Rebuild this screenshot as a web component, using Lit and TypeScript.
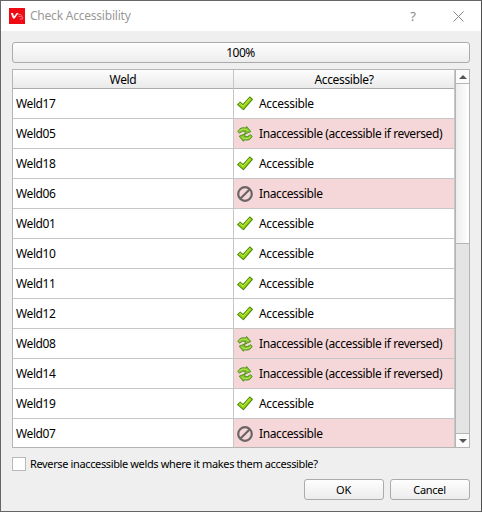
import { LitElement, html, css, svg } from "lit";
import { customElement } from "lit/decorators.js";

type Status = "ok" | "reversible" | "blocked";

const LABELS: Record<Status, string> = {
  ok: "Accessible",
  reversible: "Inaccessible (accessible if reversed)",
  blocked: "Inaccessible",
};

const WELDS: [string, Status][] = [
  ["Weld17", "ok"],
  ["Weld05", "reversible"],
  ["Weld18", "ok"],
  ["Weld06", "blocked"],
  ["Weld01", "ok"],
  ["Weld10", "ok"],
  ["Weld11", "ok"],
  ["Weld12", "ok"],
  ["Weld08", "reversible"],
  ["Weld14", "reversible"],
  ["Weld19", "ok"],
  ["Weld07", "blocked"],
];

const arrow = () => svg`<path d="M.8 5.6C2.2 2.4 5 1.1 8.8 2L9.6.5 13.8 5.6 8 8 8.4 5.7C6.2 4.8 4.4 5.2 2.9 7.2Z"
    fill="#84c62c" stroke="#4b8a14" stroke-width=".9" stroke-linejoin="round"/>
  <path d="M2.3 5.4C3.8 3.2 6 2.7 9.2 3.4L11.4 4.8" fill="none" stroke="#c0e868" stroke-width=".9"/>`;

const ICONS: Record<Status, unknown> = {
  ok: svg`<path d="M.7 8.6 3.2 6.2 6 8.7 12.8 1 15.4 3.4 6.4 13.6Z" fill="#9bd60f" stroke="#4d8a0b" stroke-width="1.1" stroke-linejoin="round"/>
    <path d="M2.2 8.4 3.3 7.4 6.1 10.1 13 2.4" fill="none" stroke="#c4ee55" stroke-width=".9"/>`,
  reversible: svg`${arrow()}<g transform="rotate(180 8 7.9)">${arrow()}</g>`,
  blocked: svg`<circle cx="8" cy="8" r="6.8" fill="none" stroke="#696466" stroke-width="2.2"/>
    <path d="M3.5 12.5 12.5 3.5" stroke="#696466" stroke-width="2.2"/>`,
};

@customElement("app-root")
export class AppRoot extends LitElement {
  static styles = css`
    :host {
      display: flex;
      flex-direction: column;
      box-sizing: border-box;
      width: 482px;
      height: 512px;
      border: 1px solid #666;
      border-right-color: #505050;
      background: #efefef;
      color: #000;
      font: 12px/16px "Noto Sans", "Open Sans", sans-serif;
      white-space: nowrap;
      overflow: hidden;
    }
    * { box-sizing: border-box; }
    svg { display: block; flex: none; }
    .title {
      display: flex;
      align-items: center;
      height: 30px;
      flex: none;
      padding: 0 17px 0 8px;
      background: #fff;
      color: #999;
    }
    .caption { margin-left: 5px; flex: 1; letter-spacing: -0.22px; }
    .help { margin-right: 37px; font-size: 13px; color: #8a8a8a; }
    .content { display: flex; flex-direction: column; padding: 11px; }
    .progress, .button {
      display: flex;
      align-items: center;
      justify-content: center;
      height: 21px;
      border: 1px solid #ababab;
      border-radius: 3px;
      background: linear-gradient(#fefefe, #ececec);
    }
    .progress { letter-spacing: -0.5px; padding-right: 1px; }
    .table { display: flex; height: 379px; margin-top: 6px; border: 1px solid #b5b5b5; background: #fff; }
    .grid { flex: 1; }
    .row, .head { display: grid; grid-template-columns: 221px 221px; }
    .head { height: 19px; background: linear-gradient(#fdfdfd, #eaeaea); border-bottom: 1px solid #ababab; text-align: center; line-height: 19px; letter-spacing: -0.35px; }
    .head div { border-right: 1px solid #c6c6c6; }
    .row { height: 30px; }
    .cell { display: flex; align-items: center; height: 30px; padding: 0 0 0 3px; border-right: 1px solid #c6c6c6; border-bottom: 1px solid #c6c6c6; letter-spacing: -0.4px; }
    .row:last-child, .row:last-child .cell { height: 28px; border-bottom: 0; }
    .row:last-child .cell { padding-top: 1px; }
    .bad { background: #f6d7d9; }
    .cell svg { margin-right: 6px; }
    .ok { letter-spacing: -0.3px; }
    .scroll { display: flex; flex-direction: column; width: 15px; border-left: 1px solid #b5b5b5; background: #e4e4e4; }
    .step { display: flex; align-items: center; justify-content: center; height: 13px; background: #fbfbfb; }
    .thumb { height: 161px; border: solid #b5b5b5; border-width: 1px 0; background: linear-gradient(90deg, #ededed, #fff); }
    .down { height: 14px; margin-top: auto; border-top: 1px solid #b5b5b5; }
    .option { display: flex; align-items: center; height: 16px; margin-top: 8px; font-size: 11px; }
    .box { width: 14px; height: 14px; border: 1px solid #b9b9b9; background: #fff; }
    .option span { margin-left: 4px; letter-spacing: -0.37px; }
    .actions { display: flex; justify-content: flex-end; gap: 6px; margin-top: 7px; }
    .button { width: 80px; font-size: 11px; letter-spacing: -0.3px; padding-right: 1px; }
  `;

  render() {
    return html`
      <div class="title">
        <svg width="16" height="16" viewBox="0 0 16 16">
          <path d="M0 0H16V16H0Z" fill="#f00a14" />
          <path d="M1.8 5H4L5 8.6 7.7 5H9.4L5.7 10.5H4Z" fill="#fff" />
          <path d="M8.6 6.4H11.4L13.4 8M9.5 8.4H11.8L13.6 9.2V11H10.8" fill="none" stroke="#ff8e92" stroke-width=".8" />
        </svg>
        <span class="caption">Check Accessibility</span>
        <span class="help">?</span>
        <svg width="11" height="11" viewBox="0 0 11 11"><path d="M.5.5 10.5 10.5M10.5.5.5 10.5" stroke="#858585" fill="none" /></svg>
      </div>
      <div class="content">
        <div class="progress">100%</div>
        <div class="table">
          <div class="grid">
            <div class="head"><div>Weld</div><div>Accessible?</div></div>
            ${WELDS.map(
              ([name, status]) => html`<div class="row">
                <div class="cell">${name}</div>
                <div class="cell ${status === "ok" ? "" : "bad"}">
                  <svg width="16" height="16" viewBox="0 0 16 16">${ICONS[status]}</svg>
                  <span class=${status}>${LABELS[status]}</span>
                </div>
              </div>`
            )}
          </div>
          <div class="scroll">
            <div class="step"><svg width="8" height="4" viewBox="0 0 8 4"><path d="M0 4 4 0 8 4Z" fill="#555" /></svg></div>
            <div class="thumb"></div>
            <div class="step down"><svg width="8" height="4" viewBox="0 0 8 4"><path d="M0 0 4 4 8 0Z" fill="#555" /></svg></div>
          </div>
        </div>
        <div class="option"><div class="box"></div><span>Reverse inaccessible welds where it makes them accessible?</span></div>
        <div class="actions"><div class="button">OK</div><div class="button">Cancel</div></div>
      </div>
    `;
  }
}
